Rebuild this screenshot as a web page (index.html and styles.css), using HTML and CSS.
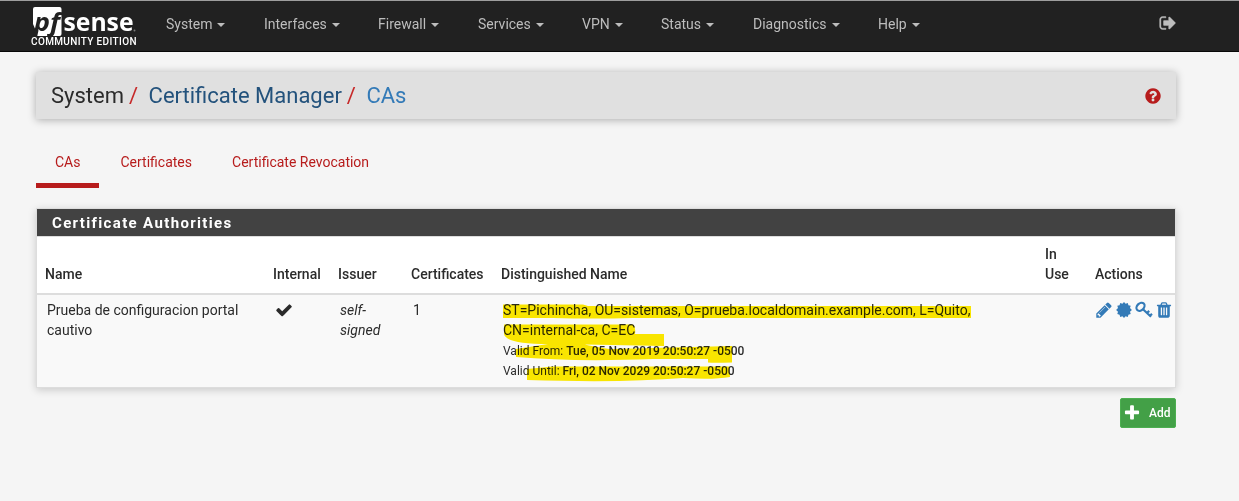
FILE: index.html
```html
<!DOCTYPE html>
<html lang="en">
<head>
<meta charset="utf-8">
<title>System: Certificate Manager: CAs</title>
<link rel="stylesheet" href="styles.css">
</head>
<body>
<header class="navbar">
  <a class="brand">
    <svg class="logo" width="110" height="31" viewBox="0 0 110 31">
      <path class="logo-box" d="M5 1h24.500a2 2 0 0 1 2 2v25a2 2 0 0 1-2 2H6V25L3 18V3a2 2 0 0 1 2-2z"/>
      <text class="logo-pf" x="4" y="24.500" textLength="26" lengthAdjust="spacingAndGlyphs">pf</text>
      <text class="logo-sense" x="33.500" y="24.800" textLength="70" lengthAdjust="spacingAndGlyphs">sense</text>
      <circle class="logo-dot" cx="104.500" cy="24.500" r="1"/>
    </svg>
    <span class="edition">COMMUNITY EDITION</span>
  </a>
  <nav class="menu">
    <a class="w-system">System<i class="caret"></i></a>
    <a class="w-interfaces">Interfaces<i class="caret"></i></a>
    <a class="w-firewall">Firewall<i class="caret"></i></a>
    <a class="w-services">Services<i class="caret"></i></a>
    <a class="w-vpn">VPN<i class="caret"></i></a>
    <a class="w-status">Status<i class="caret"></i></a>
    <a class="w-diagnostics">Diagnostics<i class="caret"></i></a>
    <a>Help<i class="caret"></i></a>
  </nav>
  <svg class="icon signout" viewBox="0 0 1792 1792"><path d="M704 1440q0 4 1 20t.5 26.500-3 23.500-10 19.500-20.500 6.500h-320q-119 0-203.500-84.500t-84.500-203.500v-704q0-119 84.500-203.500t203.500-84.500h320q13 0 22.500 9.500t9.500 22.500q0 4 1 20t.5 26.500-3 23.500-10 19.500-20.500 6.500h-320q-66 0-113 47t-47 113v704q0 66 47 113t113 47h312l11.500 1 11.500 3 8 5.500 7 9 2 13.500zm928-544q0 26-19 45l-544 544q-19 19-45 19t-45-19-19-45v-288h-448q-26 0-45-19t-19-45v-384q0-26 19-45t45-19h448v-288q0-26 19-45t45-19 45 19l544 544q19 19 19 45z"/></svg>
</header>
<main class="container">
  <div class="breadcrumb">
    <span class="crumb-system">System</span><span class="slash">/</span><a class="crumb-manager">Certificate Manager</a><span class="slash">/</span><a class="crumb-cas">CAs</a>
    <svg class="icon help" viewBox="0 0 1792 1792"><path d="M1024 1376v-192q0-14-9-23t-23-9h-192q-14 0-23 9t-9 23v192q0 14 9 23t23 9h192q14 0 23-9t9-23zm256-672q0-88-55.500-163t-138.500-116-170-41q-243 0-371 213-15 24 8 42l132 100q7 6 19 6 16 0 25-12 53-68 86-92 34-24 86-24 48 0 85.500 26t37.500 59q0 38-20 61t-68 45q-63 28-115.500 86.500t-52.500 125.500v36q0 14 9 23t23 9h192q14 0 23-9t9-23q0-19 21.500-49.500t54.500-49.500q32-18 49-28.500t46-35 44.500-48 28-60.500 12.500-81zm384 192q0 209-103 385.500t-279.500 279.500-385.500 103-385.500-103-279.500-279.500-103-385.500 103-385.500 279.500-279.500 385.500-103 385.500 103 279.500 279.500 103 385.500z"/></svg>
  </div>
  <nav class="tabs">
    <a class="active">CAs</a><a>Certificates</a><a>Certificate Revocation</a>
  </nav>
  <section class="panel">
    <h2>Certificate Authorities</h2>
    <table>
      <colgroup><col class="c-name"><col class="c-internal"><col class="c-issuer"><col class="c-certs"><col class="c-dn"><col class="c-use"><col class="c-actions"></colgroup>
      <thead><tr><th>Name</th><th>Internal</th><th>Issuer</th><th>Certificates</th><th>Distinguished Name</th><th>In<br>Use</th><th>Actions</th></tr></thead>
      <tbody><tr>
        <td>Prueba de configuracion portal<br>cautivo</td>
        <td><svg class="icon check" viewBox="0 0 1792 1792"><path d="M1671 566q0 40-28 68l-724 724-136 136q-28 28-68 28t-68-28l-136-136-362-362q-28-28-28-68t28-68l136-136q28-28 68-28t68 28l294 295 656-657q28-28 68-28t68 28l136 136q28 28 28 68z"/></svg></td>
        <td><em>self-<br>signed</em></td>
        <td>1</td>
        <td class="dn">
          <div class="dn-text">ST=Pichincha, OU=sistemas, O=prueba.localdomain.example.com, L=Quito,<br>CN=internal-ca, C=EC</div>
          <div class="valid">Valid From: <b>Tue, 05 Nov 2019 20:50:27 -0500</b></div>
          <div class="valid">Valid Until: <b>Fri, 02 Nov 2029 20:50:27 -0500</b></div>
          <svg class="marker" width="490" height="92" viewBox="0 0 490 92">
            <path d="M10 8.500H90L95 10H478V22H140Q100 23 60 22H10z"/>
            <path d="M11 28.500H140Q143 31 142 38H171V50L92 48.500Q98 50 120 53.500V53L239 50V66.500Q220 67 215 66.500V63H160Q80 66 23 61V53L55 48Q13 48 11 38z"/>
            <path d="M34 73L60 70.500H236L237 81Q220 84 190 82Q130 87 34 84z"/>
          </svg>
        </td>
        <td></td>
        <td><div class="actions">
          <svg class="icon" viewBox="0 0 1792 1792"><path d="M491 1536l91-91-235-235-91 91v107h128v128h107zm523-928q0-22-22-22-10 0-17 7l-542 542q-7 7-7 17 0 22 22 22 10 0 17-7l542-542q7-7 7-17zm-54-192l416 416-832 832h-416v-416zm683 96q0 53-37 90l-166 166-416-416 166-165q36-38 90-38 53 0 91 38l235 234q37 39 37 91z"/></svg>
          <svg class="icon" viewBox="0 0 18 18"><path d="M9 1l1.600 1.700L12.800 1.900l.6 2.300 2.300.6-.7 2.200L16.900 9l-1.900 1.800.7 2.300-2.300.6-.6 2.300-2.200-.7L9 17l-1.600-1.700-2.200.7-.6-2.300-2.300-.6.7-2.300L1.100 9 3 7l-.7-2.200 2.300-.6.6-2.300 2.200.8z"/></svg>
          <svg class="icon key" viewBox="0 0 18 18"><ellipse cx="5.500" cy="5.800" rx="4.600" ry="3.400" transform="rotate(-45 5.500 5.800)"/><path d="M8 8.200L16 15.700M12 12l2.200-2.100M15 14.800l2-1.900"/></svg>
          <svg class="icon" viewBox="0 0 1792 1792"><path d="M704 1376v-704q0-14-9-23t-23-9h-64q-14 0-23 9t-9 23v704q0 14 9 23t23 9h64q14 0 23-9t9-23zm256 0v-704q0-14-9-23t-23-9h-64q-14 0-23 9t-9 23v704q0 14 9 23t23 9h64q14 0 23-9t9-23zm256 0v-704q0-14-9-23t-23-9h-64q-14 0-23 9t-9 23v704q0 14 9 23t23 9h64q14 0 23-9t9-23zm-544-992h448l-48-117q-7-9-17-11h-317q-10 2-17 11zm928 32v64q0 14-9 23t-23 9h-96v948q0 83-47 143.500t-113 60.500h-832q-66 0-113-58.500t-47-141.500v-952h-96q-14 0-23-9t-9-23v-64q0-14 9-23t23-9h309l70-167q15-37 54-63t79-26h320q40 0 79 26t54 63l70 167h309q14 0 23 9t9 23z"/></svg>
        </div></td>
      </tr></tbody>
    </table>
  </section>
  <a class="add"><svg class="icon" viewBox="0 0 1792 1792"><path d="M1600 736v192q0 40-28 68t-68 28h-416v416q0 40-28 68t-68 28h-192q-40 0-68-28t-28-68v-416h-416q-40 0-68-28t-28-68v-192q0-40 28-68t68-28h416v-416q0-40 28-68t68-28h192q40 0 68 28t28 68v416h416q40 0 68 28t28 68z"/></svg>Add</a>
</main>
</body>
</html>
```
FILE: styles.css
```css
* { box-sizing: border-box; }
body { margin: 0; background: #f5f5f5; color: #2b2b2b; font: 14px/20px Roboto, sans-serif; }
.icon { display: block; width: 18px; height: 18px; fill: currentColor; }
.navbar { display: flex; height: 52px; padding-left: 30px; background: #212121; border-top: 1px solid #9e9e9e; border-bottom: 1px solid #080808; color: #bdbdbd; }
.brand { width: 136px; padding-top: 5px; display: flex; flex-direction: column; }
.logo { display: block; flex: none; overflow: visible; }
.logo-box, .logo-sense { fill: #fff; }
.logo-pf { fill: #212121; font: italic 700 25px "Open Sans", sans-serif; }
.logo-sense { font: 700 24.500px "Open Sans", sans-serif; }
.logo-dot { fill: #777; }
.edition { color: #fff; font-size: 10px; line-height: 10px; font-weight: 500; letter-spacing: .36px; padding-left: 1px; white-space: nowrap; }
.menu { display: flex; width: 993px; padding-top: 13px; }
.menu a { white-space: nowrap; }
.caret { display: inline-block; margin-left: 5px; vertical-align: middle; border-top: 4px solid; border-left: 4px solid transparent; border-right: 4px solid transparent; }
.w-system { width: 98px; }
.w-interfaces { width: 114px; }
.w-firewall { width: 100px; }
.w-services { width: 104px; }
.w-vpn { width: 79px; }
.w-status { width: 92px; }
.w-diagnostics { width: 125px; }
.signout { margin-top: 13px; stroke: currentColor; stroke-width: 40; }
.container { display: flex; flex-direction: column; width: 1140px; margin: 20px 0 0 36px; }
.breadcrumb { display: flex; align-items: center; height: 47px; padding: 0 14px 0 15px; background: #e0e0e0; box-shadow: 0 1px 8px rgba(0,0,0,.3); font-size: 22px; white-space: nowrap; }
.slash { color: #c62828; margin: 0 10.500px 0 5px; }
.crumb-manager { color: #23527c; }
.crumb-cas { color: #337ab7; }
.help { margin-left: auto; color: #b71c1c; }
.tabs { display: flex; height: 69px; padding-top: 28px; color: #b71c1c; }
.tabs a { height: 41px; padding: 5px 19px 0; margin-right: 2px; border-bottom: 5px solid transparent; }
.tabs .active { border-color: #b71c1c; }
.panel { height: 180px; margin-top: 20px; border: 1px solid #ddd; background: #fff; box-shadow: 0 2px 8px rgba(0,0,0,.18); }
.panel h2 { margin: 0; height: 28px; padding: 4px 15px; background: #424242; border-bottom: 1px solid #ddd; color: #fff; font-size: 15px; line-height: 20px; font-weight: 700; letter-spacing: 1.350px; }
table { width: 1138px; table-layout: fixed; border-collapse: separate; border-spacing: 0; }
.c-name { width: 228px; }
.c-internal { width: 65px; }
.c-issuer { width: 73px; }
.c-certs { width: 90px; }
.c-dn { width: 544px; }
.c-use { width: 50px; }
.c-actions { width: 88px; }
th { height: 58px; padding: 7px 8px 9px; vertical-align: bottom; text-align: left; font-weight: 500; border-bottom: 2px solid #ddd; white-space: nowrap; }
td { height: 92px; padding: 5px 0 0 10px; vertical-align: top; background: #f9f9f9; white-space: nowrap; }
.check { margin-top: 1px; }
.dn { position: relative; }
.dn-text { margin-bottom: 1px; }
.valid { font-size: 12px; }
.valid b { font-weight: 500; }
.marker { position: absolute; left: 0; top: 1px; fill: #ffeb00; mix-blend-mode: multiply; }
.actions { display: flex; gap: 2px; padding-top: 1px; margin-left: -2px; color: #337ab7; }
.key { fill: none; stroke: currentColor; stroke-width: 2.200; }
.add { align-self: flex-end; display: flex; align-items: center; gap: 8px; width: 56px; height: 30px; margin-top: 10px; padding-left: 2px; border: 1px solid #4caf50; border-radius: 2px; background: #43a047; color: #fff; font-size: 12px; font-weight: 500; }
```
